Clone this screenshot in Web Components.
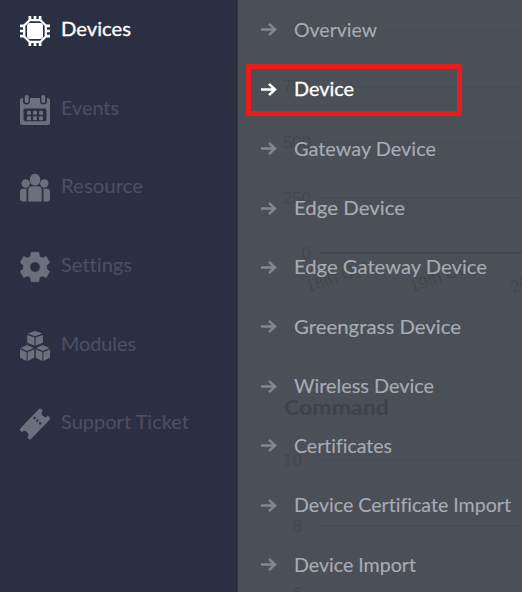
<!DOCTYPE html>
<html lang="en"><head><meta charset="utf-8"><title>Devices</title>
<style>
html,body{margin:0;width:522px;height:592px;overflow:hidden;background:#4b4f58}
</style></head><body>
<app-shell></app-shell>
<script>
const define=(name,html,setup)=>customElements.define(name,class extends HTMLElement{
  connectedCallback(){
    if(this.shadowRoot)return;
    this.attachShadow({mode:'open'}).innerHTML=html;
    if(setup)setup(this,this.shadowRoot);
  }
});

// A single line label whose glyphs are widened to a given width.
define('fit-label',`<style>
:host{display:block;white-space:nowrap;font:400 20px/24px Lato,"Open Sans",sans-serif;padding-bottom:2px;-webkit-text-stroke:.15px}
span{display:inline-block;font-variant-ligatures:none;transform-origin:0 50%}
</style><span><slot></slot></span>`,(el,root)=>{
  const s=root.querySelector('span');
  s.style.transform='scaleX('+(+el.getAttribute('fit')+1)/s.getBoundingClientRect().width+')';
});

const icons={
chip:`<path d="M9.900 0v30M15 0v30M20.100 0v30M0 9.900h30M0 15h30M0 20.100h30" stroke="currentColor" stroke-width="2.700"/><path d="M9.500 4.200h11l5.300 5.300v11l-5.300 5.300h-11l-5.300-5.300v-11z" fill="#2b2f42" stroke="currentColor" stroke-width="2.300" stroke-linejoin="round"/><rect x="7" y="7" width="16" height="16" rx="3" fill="currentColor"/>`,
calendar:`<path fill="currentColor" fill-rule="evenodd" d="M2.5 3H3v3a3.5 3.5 0 0 0 7 0V3h10v3a3.5 3.5 0 0 0 7 0V3h.5A2.5 2.5 0 0 1 30 5.5v22a2.5 2.5 0 0 1-2.5 2.5h-25A2.5 2.5 0 0 1 0 27.500v-22A2.500 2.500 0 0 1 2.500 3zM5 13.500a1.500 1.500 0 0 0-1.500 1.500v9.500A1.800 1.800 0 0 0 5.300 26.300h19.400a1.800 1.800 0 0 0 1.800-1.800V15A1.500 1.500 0 0 0 25 13.500z"/><g fill="currentColor"><rect x="4.800" width="3.800" height="8" rx="1.700"/><rect x="21.400" width="3.800" height="8" rx="1.700"/><rect x="7" y="15.700" width="4" height="4" rx="1"/><rect x="13" y="15.700" width="4" height="4" rx="1"/><rect x="19" y="15.700" width="4" height="4" rx="1"/><rect x="7" y="21.200" width="4" height="4" rx="1"/><rect x="13" y="21.200" width="4" height="4" rx="1"/><rect x="19" y="21.200" width="4" height="4" rx="1"/></g>`,
people:`<g fill="currentColor" transform="translate(0 .8)"><path d="M15 0c2.900 0 5.200 2.900 5.200 6.200S18 11.700 15 11.700 9.800 9.500 9.800 6.200 12.100 0 15 0z"/><circle cx="5.700" cy="9.700" r="4.200"/><circle cx="24.300" cy="9.700" r="4.200"/><path d="M8.300 27.800V16.500a4 4 0 0 1 4-4h5.400a4 4 0 0 1 4 4v11.300zM6.500 27.800H3a3 3 0 0 1-3-3V18a3 3 0 0 1 3-3h3.500zM23.500 27.800H27a3 3 0 0 0 3-3V18a3 3 0 0 0-3-3h-3.500z"/></g>`,
gear:`<path fill="currentColor" stroke="currentColor" stroke-width=".6" stroke-linejoin="round" fill-rule="evenodd" d="M11.200.3h7.600l.7 4.200 2.800 1.600 4-1.600 3.400 6-3.100 2.800v3.400l3.100 2.800-3.400 6-4-1.600-2.800 1.600-.7 4.200h-7.600l-.7-4.200-2.800-1.600-4 1.600-3.400-6 3.100-2.800v-3.400L.3 10.500l3.400-6 4 1.600 2.800-1.600zM15 9.800a5.200 5.200 0 1 0 0 10.400 5.200 5.200 0 0 0 0-10.400z"/>`,
cubes:`<defs><g id="c"><path d="M7 0l6.500 2.700L7 5.500.5 2.700z"/><path d="M0 4l6.500 2.700v8.300L0 12zM14 4L7.500 6.700v8.300L14 12z"/></g></defs><g fill="currentColor"><use href="#c" transform="translate(7.200 0) scale(1.120 .97)"/><use href="#c" transform="translate(0 14) scale(1.020 1.070)"/><use href="#c" transform="translate(15.700 14) scale(1.020 1.070)"/></g>`,
ticket:`<g transform="translate(15 15) rotate(-46)"><path fill="currentColor" d="M-13.500-7.500H13.500a1.500 1.500 0 0 1 1.500 1.500V-3.700a3.700 3.700 0 0 0 0 7.400V6a1.500 1.500 0 0 1-1.500 1.500H-13.500A1.500 1.500 0 0 1-15 6V3.700a3.700 3.700 0 0 0 0-7.400V-6a1.500 1.500 0 0 1 1.500-1.500z"/><g fill="#2b2f42"><circle cx="4" cy="-4.500" r="1.250"/><circle cx="4" cy="-.6" r="1.250"/><circle cx="4" cy="3.300" r="1.250"/></g></g>`,
arrow:`<path d="M0 6.500h13.500M8 .8l6 5.700-6 5.700" fill="none" stroke="currentColor" stroke-width="2.500"/>`
};
define('ui-icon',`<style>:host{display:block;flex:none;width:30px;height:30px}svg{display:block;width:100%;height:100%;overflow:visible}</style><svg></svg>`,(el,root)=>{
  const n=el.getAttribute('name'),s=root.querySelector('svg');
  s.setAttribute('viewBox',n==='arrow'?'0 0 15 13':'0 0 30 30');
  s.innerHTML=icons[n];
});

define('main-item',`<style>
:host{display:grid;grid-template-columns:30px 1fr;column-gap:11px;height:78.670px;align-items:start;box-sizing:border-box;padding-top:16px;color:#6c707d}
::slotted(fit-label){color:#4c505f}
:host([active]){color:#fff}:host([active]) ::slotted(fit-label){color:#fff;-webkit-text-stroke:.3px}
</style><slot name="icon"></slot><slot></slot>`);

define('sub-item',`<style>
:host{display:grid;grid-template-columns:15px 1fr;column-gap:18px;height:59.450px;align-items:center;color:#a8abb3}
ui-icon{width:15px;height:13px;color:#82868e}
:host([active]),:host([active]) ui-icon{color:#fff}
:host([active]) ::slotted(fit-label){-webkit-text-stroke:.3px}
</style><ui-icon name="arrow"></ui-icon><slot></slot>`);

define('chart-backdrop',`<style>
:host{position:absolute;inset:0 0 0 238px}svg{display:block}
text{font:17px "Liberation Sans",Arial,sans-serif;fill:#43474f}
</style><svg width="284" height="592" viewBox="238 0 284 592">
<path d="M319 30.500H522M319 87H522M319 142.500H522M319 198H522M319 459.500H522M319 526H522" stroke="#474b54"/>
<path d="M319 253H522" stroke="#42464f" stroke-width="2"/>
<path d="M260 343.500H522M260 375.500H522" stroke="#494d56"/>
<g text-anchor="end"><text x="309" y="37">1k</text><text x="311" y="92">750</text><text x="311" y="148">500</text><text x="311" y="204">250</text><text x="311" y="259">0</text><text x="302" y="466">10</text><text x="302" y="532">8</text><text x="302" y="599">6</text></g>
<text transform="translate(308 293) rotate(-20)">18th Oct</text><text transform="translate(412 293) rotate(-20)">19th Oct</text><text transform="translate(513 293) rotate(-20)">20th Oct</text>
<text x="284" y="415" textLength="105" lengthAdjust="spacingAndGlyphs" style="font:700 21px Lato,sans-serif;fill:#3e424b">Command</text></svg>`);

define('focus-frame',`<style>:host{position:absolute;left:246px;top:64px;width:216px;height:52px;box-sizing:border-box;border:5px solid #e71d1d}</style>`);

const main=[['chip','Devices',71],['calendar','Events',59],['people','Resource',83],['gear','Settings',72],['cubes','Modules',76],['ticket','Support Ticket',129]];
const sub=[['Overview',84],['Device',61],['Gateway Device',143],['Edge Device',112],['Edge Gateway Device',194],['Greengrass Device',168],['Wireless Device',141],['Certificates',99],['Device Certificate Import',218],['Device Import',123]];
define('app-shell',`<style>
:host{display:grid;grid-template-columns:238px 284px;width:522px;height:592px;position:relative;overflow:hidden;background:#4b4f58}
aside{background:#2b2f42;border-right:1px solid #34383f;box-sizing:border-box;padding-left:20px}
nav{position:relative;padding-left:23px}
</style><aside>${main.map(([i,t,w],n)=>`<main-item${n?'':' active'}><ui-icon slot="icon" name="${i}"></ui-icon><fit-label fit="${w-2}">${t}</fit-label></main-item>`).join('')}</aside><chart-backdrop></chart-backdrop><nav>${sub.map(([t,w],n)=>`<sub-item${n===1?' active':''}><fit-label fit="${w-2}">${t}</fit-label></sub-item>`).join('')}</nav><focus-frame></focus-frame>`);
</script></body></html>
